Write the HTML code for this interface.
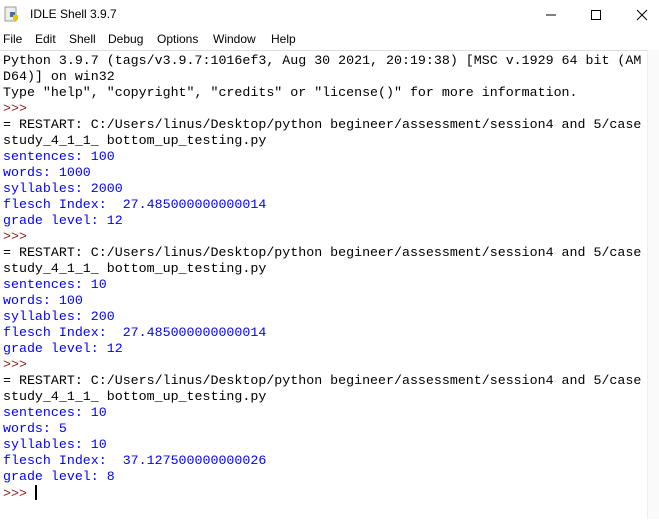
<!DOCTYPE html><html><head><style>
body{margin:0;width:659px;height:519px;background:#fff;overflow:hidden;position:relative;font-family:"Liberation Sans",sans-serif}
.t{position:absolute;left:30px;top:7px;font-size:12px;color:#000}
.m{position:absolute;top:32px;font-size:12px;color:#000}
.area{position:absolute;left:0;top:50px;width:647px;height:469px;border-top:1px solid #ddd}
.sb{position:absolute;left:647px;top:50px;width:12px;height:469px;background:#fafafa;border-left:1px solid #eee}
pre{position:absolute;left:3px;top:53px;margin:0;font-family:"Liberation Mono",monospace;font-size:13.3px;line-height:16px;color:#000}
.b{color:#0000ff}.r{color:#8b1a1a}
</style></head><body>
<svg style="position:absolute;left:4px;top:6px" width="16" height="16"><rect x="1" y="1" width="11" height="14" fill="#eee" stroke="#999"/><rect x="6" y="6" width="5" height="5" fill="#3a72b0"/><rect x="9" y="9" width="5" height="5" fill="#f5c400"/></svg>
<div class="t">IDLE Shell 3.9.7</div>
<svg style="position:absolute;left:546px;top:8px" width="110" height="14"><line x1="0" y1="7" x2="10" y2="7" stroke="#000"/><rect x="45.5" y="2.5" width="9" height="9" fill="none" stroke="#000"/><path d="M91 2L101 12M101 2L91 12" stroke="#000"/></svg>
<div class="m" style="left:3px">File</div><div class="m" style="left:35px">Edit</div><div class="m" style="left:69px">Shell</div><div class="m" style="left:108px">Debug</div><div class="m" style="left:157px">Options</div><div class="m" style="left:213px">Window</div><div class="m" style="left:271px">Help</div>
<div class="area"></div><div class="sb"></div>
<pre>Python 3.9.7 (tags/v3.9.7:1016ef3, Aug 30 2021, 20:19:38) [MSC v.1929 64 bit (AM
D64)] on win32
Type "help", "copyright", "credits" or "license()" for more information.
<span class="r">&gt;&gt;&gt;</span>
= RESTART: C:/Users/linus/Desktop/python begineer/assessment/session4 and 5/case
study_4_1_1_ bottom_up_testing.py
<span class="b">sentences: 100
words: 1000
syllables: 2000
flesch Index:  27.485000000000014
grade level: 12</span>
<span class="r">&gt;&gt;&gt;</span>
= RESTART: C:/Users/linus/Desktop/python begineer/assessment/session4 and 5/case
study_4_1_1_ bottom_up_testing.py
<span class="b">sentences: 10
words: 100
syllables: 200
flesch Index:  27.485000000000014
grade level: 12</span>
<span class="r">&gt;&gt;&gt;</span>
= RESTART: C:/Users/linus/Desktop/python begineer/assessment/session4 and 5/case
study_4_1_1_ bottom_up_testing.py
<span class="b">sentences: 10
words: 5
syllables: 10
flesch Index:  37.127500000000026
grade level: 8</span>
<span class="r">&gt;&gt;&gt;</span> <span style="display:inline-block;width:2px;height:15px;background:#000;vertical-align:-3px"></span></pre>
</body></html>
